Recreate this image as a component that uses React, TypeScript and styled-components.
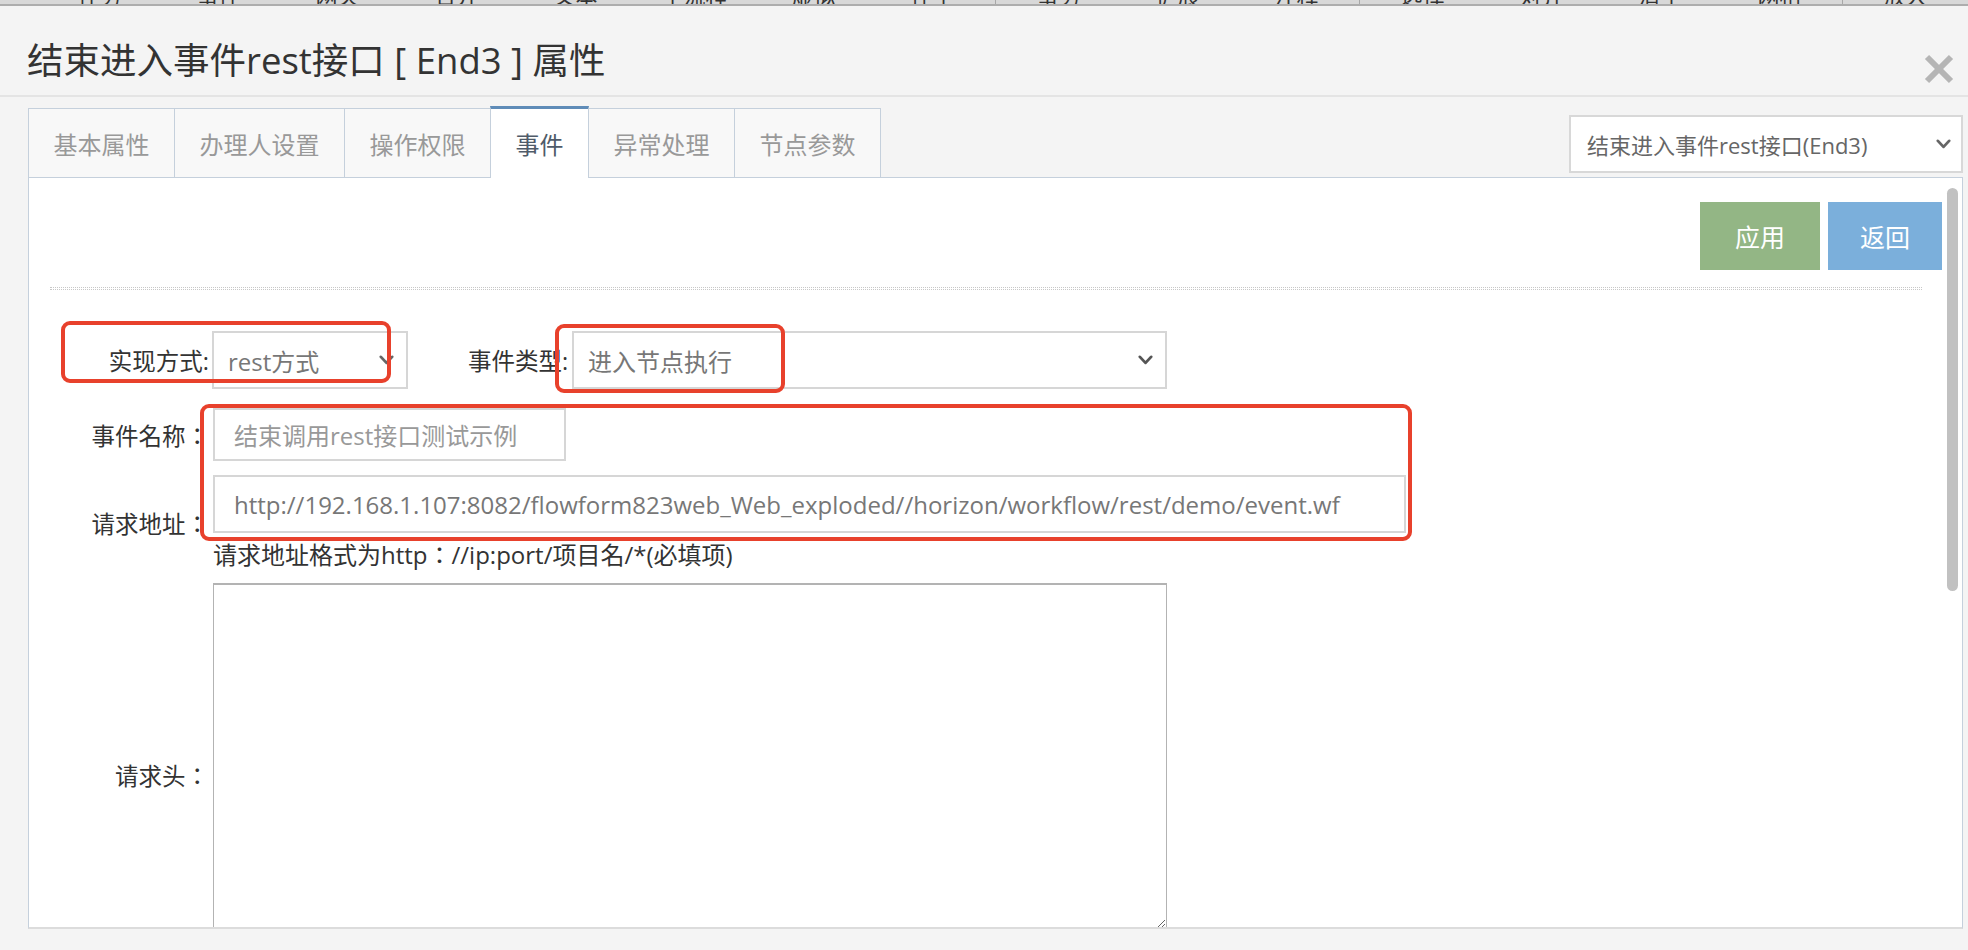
import React from "react";
import styled, { createGlobalStyle, css } from "styled-components";

const GlobalStyle = createGlobalStyle`
  html, body { margin: 0; padding: 0; }
  body {
    background: #f4f4f4;
    font-family: "Open Sans", "Noto Sans CJK SC", sans-serif;
    overflow: hidden;
  }
  * { box-sizing: border-box; }
`;

const Page = styled.div`
  height: 950px;
  display: flex;
  flex-direction: column;
  background: #f4f4f4;
  overflow: hidden;
`;

const TopStrip = styled.div`
  height: 6px;
  flex: none;
  display: flex;
  align-items: flex-end;
  overflow: hidden;
  background: #d8d8d8;
  border-bottom: 2px solid #adadad;
  padding-left: 40px;
`;

const StripItem = styled.div`
  width: 119px;
  flex: none;
  text-align: center;
  font-size: 22px;
  line-height: 22px;
  color: #333;
  margin-bottom: -2px;
`;

const StripSep = styled.div`
  width: 1px;
  height: 6px;
  flex: none;
  background: #a8a8a8;
  margin: 0 3px;
`;

const Header = styled.div`
  height: 91px;
  flex: none;
  display: flex;
  justify-content: space-between;
  align-items: flex-start;
  padding: 31px 13px 0 27px;
  border-bottom: 2px solid #e4e4e4;
`;

const Title = styled.h1`
  margin: 0;
  font-weight: 400;
  font-size: 36.5px;
  line-height: 46px;
  color: #333;
`;

const CloseButton = styled.div`
  width: 32px;
  height: 30px;
  margin-top: 17px;
  display: flex;
`;

const TabsRow = styled.div`
  margin-top: 11px;
  height: 69px;
  flex: none;
  display: flex;
  justify-content: space-between;
  align-items: flex-end;
  padding: 0 5px 0 28px;
  position: relative;
  z-index: 1;
`;

const TabList = styled.div`
  display: flex;
  align-items: flex-end;
  height: 100%;
`;

const Tab = styled.div<{ $active?: boolean }>`
  height: 69px;
  display: flex;
  align-items: center;
  padding: 0 24.5px;
  font-size: 24px;
  color: #999;
  background: #f8f8f8;
  border: 1px solid #c5d0dc;
  border-bottom: 0;
  margin-left: -1px;
  &:first-child { margin-left: 0; }
  ${(p) =>
    p.$active &&
    css`
      height: 72px;
      margin-bottom: -1px;
      background: #fff;
      color: #4f5b69;
      border-top: 3px solid #5f8cb8;
      position: relative;
      z-index: 2;
    `}
`;

const NodeSelect = styled.div`
  width: 394px;
  height: 58px;
  margin-bottom: 4px;
  display: flex;
  align-items: center;
  justify-content: space-between;
  padding: 0 10px 0 16px;
  background: #fff;
  border: 2px solid #d8d8d8;
  font-size: 22px;
  color: #666;
`;

const Panel = styled.div`
  margin: 0 5px 0 28px;
  height: 752px;
  flex: none;
  position: relative;
  overflow: hidden;
  background: #fff;
  border: 1px solid #c5d0dc;
  border-bottom: 2px solid #dcdcdc;
  padding: 24px 20px 0 21px;
`;

const ButtonBar = styled.div`
  display: flex;
  justify-content: flex-end;
  gap: 8px;
`;

const ActionButton = styled.div<{ $tone: "green" | "blue"; $w: number }>`
  width: ${(p) => p.$w}px;
  height: 68px;
  display: flex;
  align-items: center;
  justify-content: center;
  color: #fff;
  font-size: 25px;
  background: ${(p) => (p.$tone === "green" ? "#93b685" : "#7bafdb")};
`;

const Divider = styled.div`
  margin: 17px 20px 0 0;
  height: 1px;
  box-sizing: content-box;
  border-top: 1px dotted #c8c8c8;
  border-bottom: 1px dotted #c8c8c8;
`;

const Form = styled.div`
  margin-top: 41px;
  display: flex;
  flex-direction: column;
`;

const Row = styled.div<{ $gap?: number }>`
  display: flex;
  align-items: center;
  margin-top: ${(p) => p.$gap ?? 0}px;
`;

const Label = styled.div<{ $w?: number; $ml?: number }>`
  width: ${(p) => p.$w ?? 159}px;
  margin-left: ${(p) => p.$ml ?? 0}px;
  flex: none;
  text-align: right;
  font-family: "Open Sans", "Noto Sans CJK TC", sans-serif;
  font-size: 23.5px;
  color: #333;
  white-space: nowrap;
`;

const SelectBox = styled.div<{ $w: number; $ml: number }>`
  width: ${(p) => p.$w}px;
  margin-left: ${(p) => p.$ml}px;
  height: 58px;
  flex: none;
  display: flex;
  align-items: center;
  justify-content: space-between;
  padding: 0 12px 0 14px;
  border: 2px solid #d6d6d6;
  background: #fff;
  font-size: 24px;
  color: #777;
`;

const TextInput = styled.input<{ $w: number; $h: number; $tone?: string }>`
  width: ${(p) => p.$w}px;
  height: ${(p) => p.$h}px;
  flex: none;
  padding: 0 18px 0 19px;
  border: 2px solid #d6d6d6;
  background: #fff;
  font-family: "Open Sans", "Noto Sans CJK SC", sans-serif;
  font-size: 24px;
  color: ${(p) => p.$tone ?? "#777"};
  outline: none;
`;

const FieldColumn = styled.div`
  margin-left: 4px;
  display: flex;
  flex-direction: column;
`;

const Hint = styled.div`
  margin-top: 7px;
  font-family: "Open Sans", "Noto Sans CJK TC", sans-serif;
  font-size: 24px;
  line-height: 30px;
  color: #333;
  white-space: nowrap;
`;

const TextArea = styled.textarea`
  width: 954px;
  height: 346px;
  border: 1px solid #b3b3b3;
  border-top-width: 2px;
  background: #fff;
  resize: both;
  outline: none;
  font-family: "Open Sans", "Noto Sans CJK SC", sans-serif;
  font-size: 22px;
`;

const Scrollbar = styled.div`
  position: absolute;
  top: 10px;
  right: 4px;
  width: 11px;
  height: 403px;
  border-radius: 6px;
  background: #c1c1c1;
`;

const Callout = styled.div<{ $x: number; $y: number; $w: number; $h: number }>`
  position: absolute;
  left: ${(p) => p.$x}px;
  top: ${(p) => p.$y}px;
  width: ${(p) => p.$w}px;
  height: ${(p) => p.$h}px;
  border: 4px solid #e8412c;
  border-radius: 9px;
  pointer-events: none;
`;

const Chevron = ({ color = "#555", size = 16 }: { color?: string; size?: number }) => (
  <svg width={size} height={size * 0.65} viewBox="0 0 16 10.4">
    <polyline
      points="2,2 8,8.4 14,2"
      fill="none"
      stroke={color}
      strokeWidth="3"
      strokeLinecap="round"
      strokeLinejoin="round"
    />
  </svg>
);

const stripItems = [
  ["任务", "事件", "网关", "合并", "文本", "子流程", "虚拟", "伴生"],
  ["事务", "扩展", "注释"],
  ["选择", "对齐", "清空", "网格"],
  ["放大"],
];

const tabs = ["基本属性", "办理人设置", "操作权限", "事件", "异常处理", "节点参数"];

export default function App() {
  return (
    <>
      <GlobalStyle />
      <Page>
        <TopStrip>
          {stripItems.map((group, gi) => (
            <React.Fragment key={gi}>
              {gi > 0 && <StripSep />}
              {group.map((t) => (
                <StripItem key={t}>{t}</StripItem>
              ))}
            </React.Fragment>
          ))}
        </TopStrip>

        <Header>
          <Title>结束进入事件rest接口 [ End3 ] 属性</Title>
          <CloseButton>
            <svg width="32" height="30" viewBox="0 0 32 30">
              <line x1="4" y1="3" x2="28" y2="27" stroke="#b5b5b5" strokeWidth="6" />
              <line x1="28" y1="3" x2="4" y2="27" stroke="#b5b5b5" strokeWidth="6" />
            </svg>
          </CloseButton>
        </Header>

        <TabsRow>
          <TabList>
            {tabs.map((t) => (
              <Tab key={t} $active={t === "事件"}>
                {t}
              </Tab>
            ))}
          </TabList>
          <NodeSelect>
            <span>结束进入事件rest接口(End3)</span>
            <Chevron color="#666" size={15} />
          </NodeSelect>
        </TabsRow>

        <Panel>
          <ButtonBar>
            <ActionButton $tone="green" $w={120}>应用</ActionButton>
            <ActionButton $tone="blue" $w={114}>返回</ActionButton>
          </ButtonBar>
          <Divider />

          <Form>
            <Row>
              <Label>实现方式:</Label>
              <SelectBox $w={196} $ml={3}>
                <span>rest方式</span>
                <Chevron color="#666" size={15} />
              </SelectBox>
              <Label $w={100} $ml={60}>事件类型:</Label>
              <SelectBox $w={595} $ml={4}>
                <span>进入节点执行</span>
                <Chevron color="#555" size={15} />
              </SelectBox>
            </Row>

            <Row $gap={19}>
              <Label>事件名称：</Label>
              <FieldColumn>
                <TextInput $w={353} $h={53} $tone="#999" readOnly defaultValue="结束调用rest接口测试示例" />
              </FieldColumn>
            </Row>

            <Row $gap={14}>
              <Label>请求地址：</Label>
              <FieldColumn>
                <TextInput
                  $w={1193}
                  $h={58}
                  readOnly
                  defaultValue="http://192.168.1.107:8082/flowform823web_Web_exploded//horizon/workflow/rest/demo/event.wf"
                />
                <Hint>请求地址格式为http：//ip:port/项目名/*(必填项)</Hint>
              </FieldColumn>
            </Row>

            <Row $gap={13}>
              <Label>请求头：</Label>
              <FieldColumn>
                <TextArea readOnly />
                <Hint>请求头格式为JSON</Hint>
              </FieldColumn>
            </Row>
          </Form>

          <Scrollbar />
          <Callout $x={32} $y={143} $w={330} $h={62} />
          <Callout $x={526} $y={146} $w={230} $h={69} />
          <Callout $x={171} $y={226} $w={1212} $h={137} />
        </Panel>
      </Page>
    </>
  );
}
